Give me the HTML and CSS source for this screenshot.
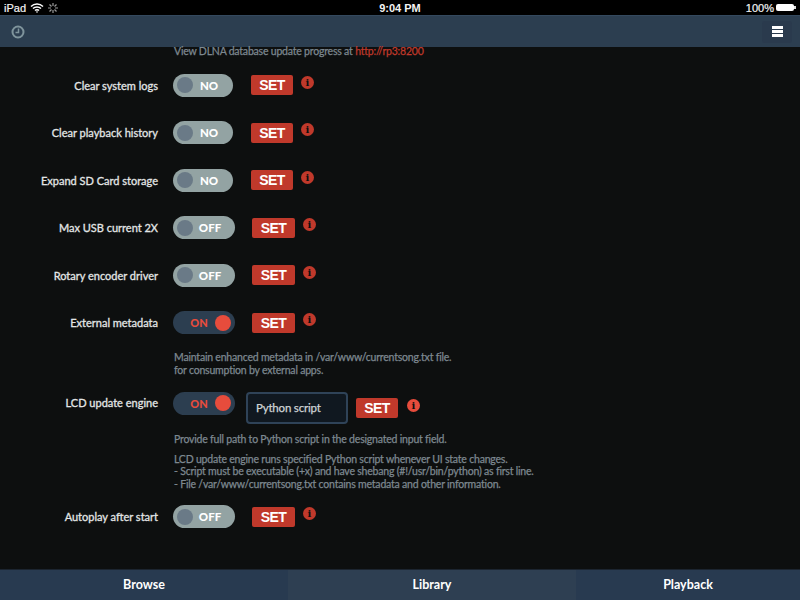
FILE: index.html
```html
<!DOCTYPE html>
<html lang="en">
<head>
<meta charset="utf-8">
<title>Settings</title>
<link rel="stylesheet" href="styles.css">
</head>
<body>
<div class="status">
  <div class="status-left"><span>iPad</span>
    <svg class="wifi" width="14" height="10" viewBox="0 0 14 10"><path d="M1 3.500a8.500 8.500 0 0 1 12 0M3 5.600a5.600 5.600 0 0 1 8 0M5 7.500a2.800 2.800 0 0 1 4 0" fill="none" stroke="#fff" stroke-width="1.500"/><path d="M7 10l-1.300-1.400h2.600z" fill="#fff"/></svg>
    <svg class="spin" width="10" height="10" viewBox="0 0 10 10"><path d="M5 0v3M5 7v3M0 5h3M7 5h3M1.500 1.500l2 2M6.500 6.500l2 2M8.500 1.500l-2 2M3.500 6.500l-2 2" stroke="#999" stroke-width="1.200"/></svg>
  </div>
  <div class="status-time">9:04 PM</div>
  <div class="status-right"><span>100%</span><span class="battery"></span><span class="battery-tip"></span></div>
</div>
<header class="topbar">
  <svg class="clock" width="14" height="14" viewBox="0 0 14 14"><circle cx="7" cy="7" r="5.500" fill="none" stroke="#7f949c" stroke-width="2"/><path d="M7.500 3.500v4H4.500" fill="none" stroke="#7f949c" stroke-width="1.500"/></svg>
  <button class="menu"><span></span><span></span><span></span></button>
</header>
<main class="content">
  <p class="help top">View DLNA database update progress at <a href="#">http://rp3:8200</a></p>
  <div class="row"><label>Clear system logs</label><div class="toggle off"><i></i><b>NO</b></div><button class="set">SET</button><span class="info">i</span></div>
  <div class="row"><label>Clear playback history</label><div class="toggle off"><i></i><b>NO</b></div><button class="set">SET</button><span class="info">i</span></div>
  <div class="row"><label>Expand SD Card storage</label><div class="toggle off"><i></i><b>NO</b></div><button class="set">SET</button><span class="info">i</span></div>
  <div class="row"><label>Max USB current 2X</label><div class="toggle off wide"><i></i><b>OFF</b></div><button class="set">SET</button><span class="info">i</span></div>
  <div class="row"><label>Rotary encoder driver</label><div class="toggle off wide"><i></i><b>OFF</b></div><button class="set">SET</button><span class="info">i</span></div>
  <div class="row"><label>External metadata</label><div class="toggle on"><b>ON</b><i></i></div><button class="set">SET</button><span class="info">i</span></div>
  <p class="help meta">Maintain enhanced metadata in /var/www/currentsong.txt file.<br>for consumption by external apps.</p>
  <div class="row lcd"><label>LCD update engine</label><div class="toggle on"><b>ON</b><i></i></div><div class="input">Python script</div><button class="set">SET</button><span class="info">i</span></div>
  <p class="help path">Provide full path to Python script in the designated input field.</p>
  <p class="help engine">LCD update engine runs specified Python script whenever UI state changes.<br>- Script must be executable (+x) and have shebang (#!/usr/bin/python) as first line.<br>- File /var/www/currentsong.txt contains metadata and other information.</p>
  <div class="row auto"><label>Autoplay after start</label><div class="toggle off wide"><i></i><b>OFF</b></div><button class="set">SET</button><span class="info">i</span></div>
</main>
<nav class="tabs">
  <div class="tab">Browse</div>
  <div class="tab active">Library</div>
  <div class="tab">Playback</div>
</nav>
</body>
</html>
```
FILE: styles.css
```css
* { box-sizing: border-box; }
html, body { margin: 0; height: 600px; overflow: hidden; }
body { display: flex; flex-direction: column; background: #0d0f0f; color: #e6e8e8; font-family: Lato, "Open Sans", sans-serif; font-size: 12px; }
.status { height: 15px; flex: none; background: #000; color: #f4f4f4; display: grid; grid-template-columns: 1fr auto 1fr; align-items: center; padding: 0 4px; font: 400 11px "Liberation Sans", sans-serif; -webkit-text-stroke: 0.2px #f4f4f4; }
.status-left { display: flex; align-items: center; gap: 4px; }
.status-right { display: flex; align-items: center; justify-content: flex-end; }
.status-time { font-weight: 700; -webkit-text-stroke: 0; }
.battery { width: 18px; height: 7px; background: #fff; border-radius: 2px; margin-left: 2px; }
.battery-tip { width: 2px; height: 3px; background: #ddd; }
.topbar { height: 32px; flex: none; background: #2c3e50; border-top: 1px solid #34495e; display: flex; align-items: center; justify-content: space-between; padding: 0 8px 0 11px; }
.menu { width: 30px; height: 22px; background: #2a3a4d; border: 0; border-radius: 3px; padding: 0; display: flex; flex-direction: column; justify-content: center; align-items: center; gap: 1.500px; }
.menu span { width: 11px; height: 2.500px; background: #fff; }
.content { flex: 1; min-height: 0; }
.help { margin: 0 0 0 174px; color: #7d8890; font-size: 10.500px; line-height: 13px; font-weight: 400; letter-spacing: -0.2px; -webkit-text-stroke: 0.25px #7d8890; }
.help a { color: #c0392b; text-decoration: none; -webkit-text-stroke: 0.25px #c0392b; }
.top { line-height: 9px; }
.meta { margin-top: 16px; }
.path { margin-top: 9px; }
.engine { margin-top: 7px; line-height: 12.500px; }
.row { display: flex; align-items: center; height: 24px; margin-top: 23.600px; }
.top + .row { margin-top: 17px; }
.lcd { height: 32px; margin-top: 15px; }
.lcd label, .lcd .toggle { align-self: flex-start; }
.lcd label { margin-top: 4px; }
.lcd .info { margin: -4px 0 0 9px; background: #e74c3c; }
.auto { margin-top: 14.500px; }
label { width: 158px; text-align: right; font-size: 11px; font-weight: 400; color: #e3e6e6; -webkit-text-stroke: 0.3px #e3e6e6; margin-right: 15px; }
.toggle { width: 60px; height: 23px; border-radius: 12px; display: flex; align-items: center; font-size: 11.500px; font-weight: 700; padding: 0 3px; flex: none; }
.toggle.wide { width: 62px; }
.toggle i { width: 16px; height: 16px; border-radius: 50%; display: block; flex: none; }
.toggle b { flex: 1; text-align: center; }
.off { background: #93a3a3; color: #fff; }
.off b { padding-right: 5px; }
.off i { background: #6a7a87; margin-left: 1px; }
.on { color: #e74c3c; }
.on b { padding-left: 7px; font-size: 11px; }
.on i { background: #e74c3c; margin-right: 1px; }
.toggle.on { width: 62px; background: #2c3e50; }
.set { width: 42px; height: 20px; margin-left: 18px; border: 0; border-radius: 2px; background: #c0392b; color: #fff; font: 700 14px "Liberation Sans", sans-serif; letter-spacing: -0.5px; padding: 0; flex: none; }
.wide + .set, .on + .set { margin-left: 17px; width: 43px; }
.info { width: 13px; height: 13px; margin: -6px 0 0 8px; border-radius: 50%; background: #c0392b; color: #0d0f0f; font: 700 10px/13px "DejaVu Serif", serif; text-align: center; flex: none; }
.input { width: 102px; height: 32px; margin-left: 11px; border: 2px solid #2f4358; border-radius: 4px; background: #101820; color: #cfd4d6; font-size: 11.500px; letter-spacing: -0.2px; -webkit-text-stroke: 0.25px #cfd4d6; line-height: 28px; padding-left: 8px; flex: none; }
.input + .set { margin-left: 8px; width: 42px; }
.tabs { height: 31px; flex: none; display: grid; grid-template-columns: 288px 288px 224px; background: #2c3e50; }
.tab { display: flex; align-items: center; justify-content: center; color: #fff; font-size: 12.500px; font-weight: 700; background: #283a50; border-top: 1px solid #1c2530; padding-bottom: 1px; }
.tab.active { background: #2e3f52; }
```
